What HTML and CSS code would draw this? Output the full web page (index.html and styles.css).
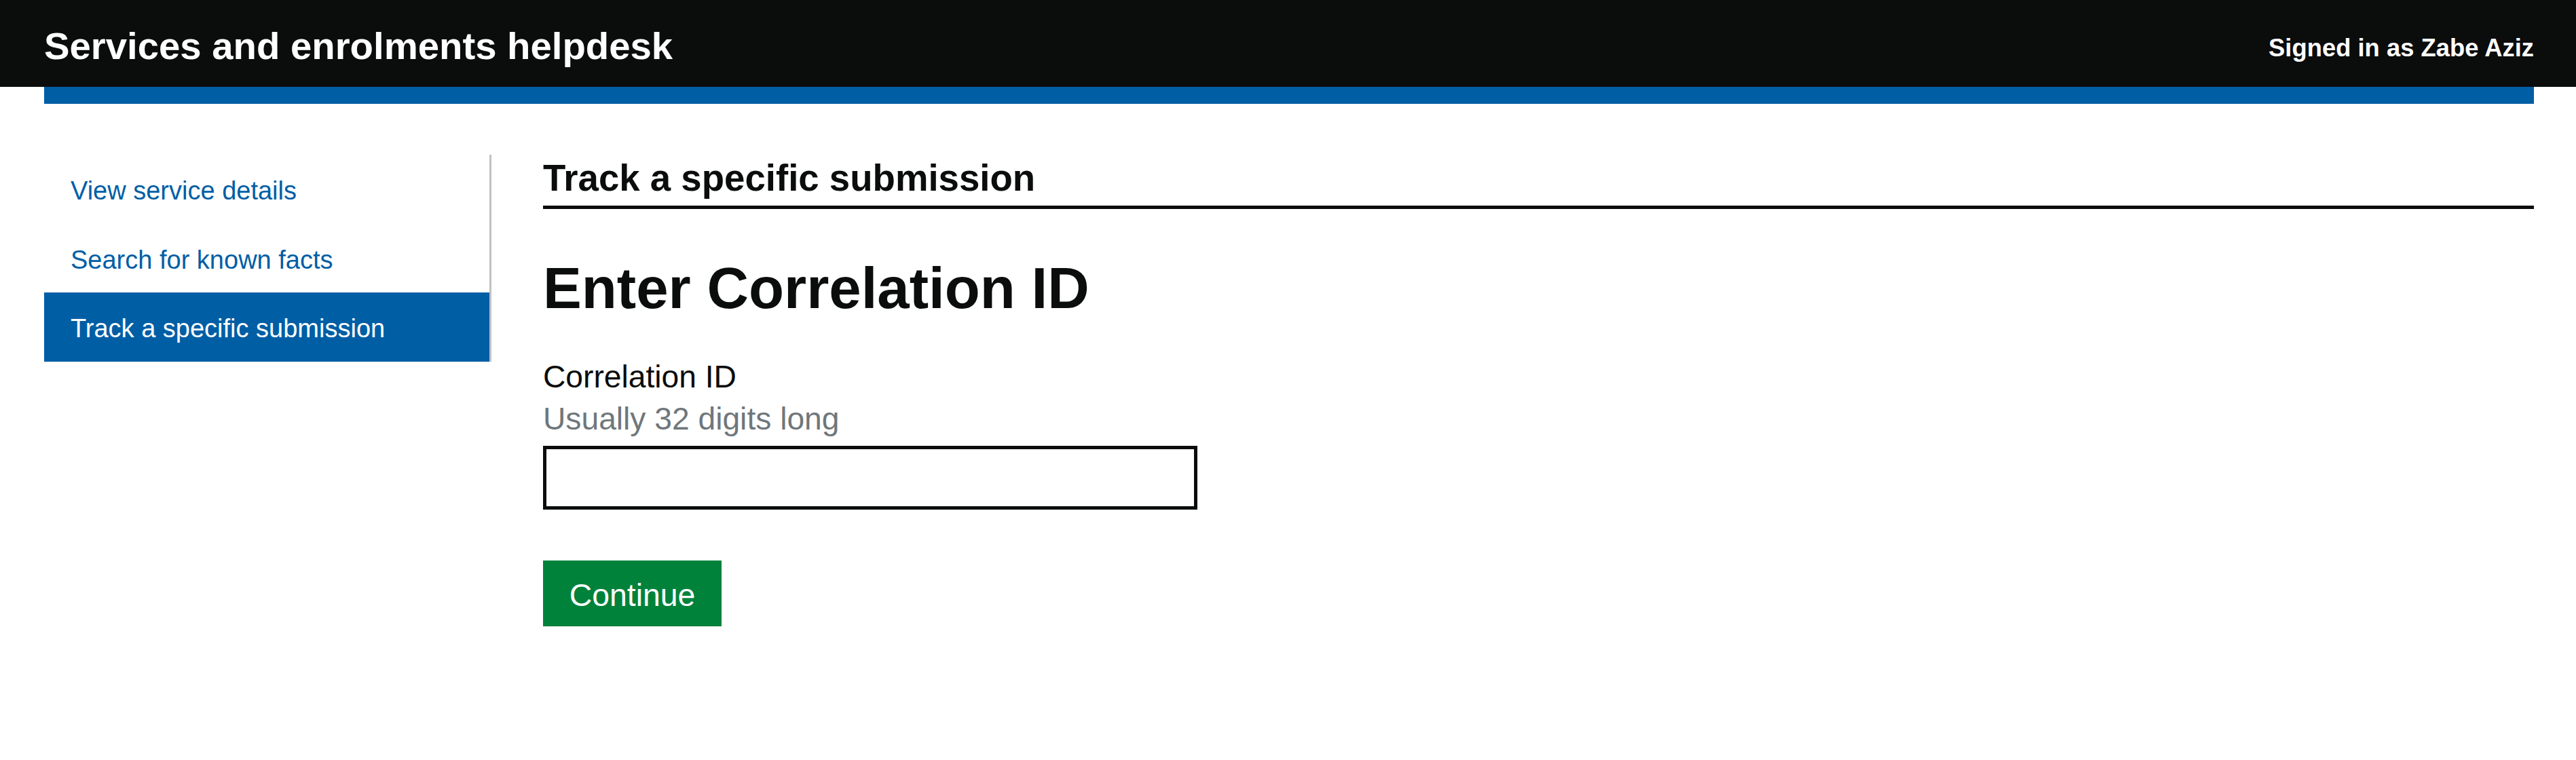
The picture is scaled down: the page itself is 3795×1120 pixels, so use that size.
FILE: index.html
```html
<!DOCTYPE html>
<html lang="en">
<head>
<meta charset="utf-8">
<title>Track a specific submission</title>
<link rel="stylesheet" href="styles.css">
</head>
<body>
<header class="header">
  <div class="header-inner">
    <div class="service-name">Services and enrolments helpdesk</div>
    <div class="signed-in">Signed in as Zabe Aziz</div>
  </div>
</header>
<div class="container">
  <div class="header-bar"></div>
  <div class="layout">
    <nav class="side-nav">
      <a class="nav-item" href="#">View service details</a>
      <a class="nav-item" href="#">Search for known facts</a>
      <a class="nav-item active" href="#">Track a specific submission</a>
    </nav>
    <main class="main">
      <h2 class="section-title">Track a specific submission</h2>
      <h1 class="page-title">Enter Correlation ID</h1>
      <form class="form">
        <label class="label" for="cid">Correlation ID</label>
        <div class="hint">Usually 32 digits long</div>
        <input class="input" id="cid" type="text">
        <button class="button" type="button">Continue</button>
      </form>
    </main>
  </div>
</div>
</body>
</html>
```

FILE: styles.css
```css
html, body {
  margin: 0;
  padding: 0;
  background: #ffffff;
  color: #0b0c0c;
  font-family: "Liberation Sans", Arial, sans-serif;
}

.header {
  background: #0b0c0c;
  height: 128px;
}

.header-inner {
  margin: 0 62px 0 65px;
  display: flex;
  justify-content: space-between;
  align-items: flex-start;
  color: #ffffff;
  font-weight: 700;
}

.service-name {
  font-size: 56.3px;
  line-height: 64px;
  margin-top: 35.5px;
}

.signed-in {
  font-size: 36.4px;
  line-height: 64px;
  margin-top: 38.5px;
}

.container {
  margin: 0 62px 0 65px;
}

.header-bar {
  height: 25px;
  background: #005ea5;
}

.layout {
  display: flex;
  align-items: flex-start;
  margin-top: 75px;
}

.side-nav {
  width: 656px;
  flex: none;
  border-right: 3px solid #bfc1c3;
  display: flex;
  flex-direction: column;
}

.nav-item {
  display: block;
  height: 101.7px;
  box-sizing: border-box;
  padding: 25px 0 0 39px;
  font-size: 38px;
  line-height: 57px;
  color: #005ea5;
  text-decoration: none;
}

.nav-item.active {
  background: #005ea5;
  color: #ffffff;
}

.main {
  flex: 1;
  margin-left: 76px;
}

.section-title {
  margin: 0;
  padding: 5px 0 10px;
  font-size: 54.6px;
  line-height: 60px;
  font-weight: 700;
  border-bottom: 5px solid #0b0c0c;
}

.page-title {
  margin: 69.5px 0 0;
  font-size: 85.2px;
  line-height: 94px;
  font-weight: 700;
}

.form {
  display: flex;
  flex-direction: column;
  align-items: flex-start;
  margin-top: 57.5px;
}

.label {
  font-size: 46.2px;
  line-height: 52px;
}

.hint {
  margin-top: 10px;
  font-size: 46.2px;
  line-height: 52px;
  color: #6f777b;
}

.input {
  margin-top: 14px;
  width: 964px;
  height: 94px;
  box-sizing: border-box;
  border: 5px solid #0b0c0c;
  border-radius: 0;
  padding: 0 10px;
  font-family: inherit;
  font-size: 46px;
  background: #ffffff;
  outline: none;
}

.button {
  margin-top: 75px;
  width: 263px;
  height: 97px;
  box-sizing: border-box;
  border: 0;
  border-radius: 0;
  padding: 0;
  background: #00823b;
  box-shadow: 0 5px 0 #003618;
  color: #ffffff;
  font-family: inherit;
  font-size: 46.4px;
  line-height: 52px;
  padding-top: 4px;
  cursor: pointer;
}
```
